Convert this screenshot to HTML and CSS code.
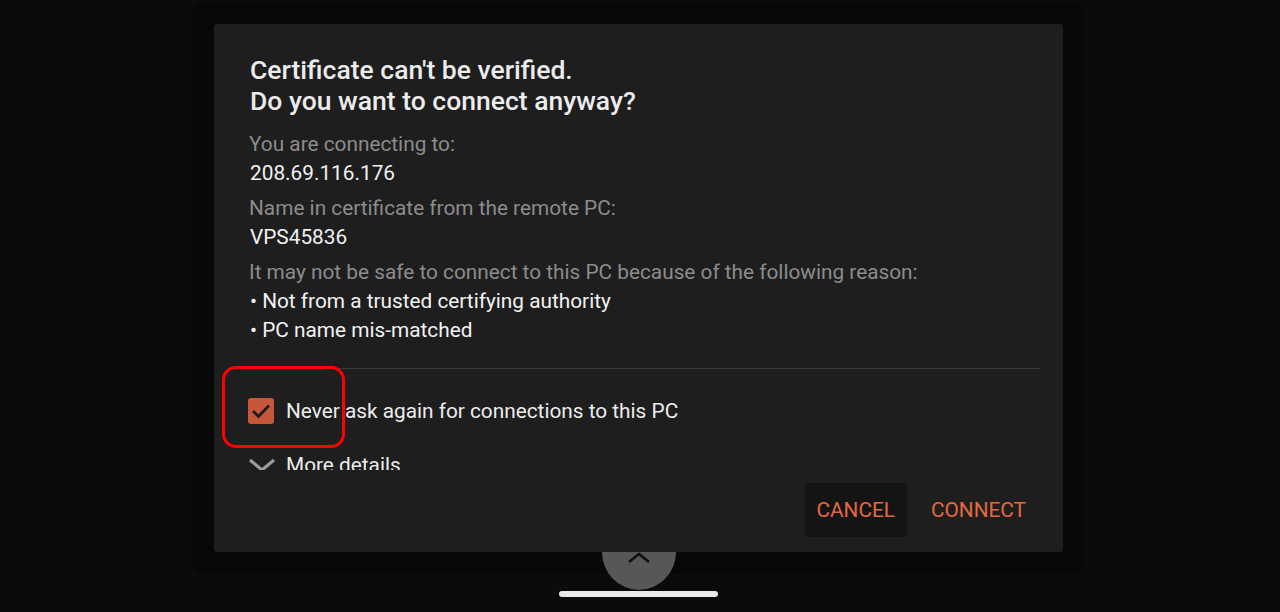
FILE: index.html
```html
<!DOCTYPE html>
<html>
    <head>
        <title>Certificate warning</title>
        <link rel="stylesheet" href="styles.css">
    </head>
    <body>
        <div class="screen">
            <div class="dialog">
                <div class="dialog-content">
                    <h2 class="dialog-title">Certificate can't be verified.<br>Do you want to connect anyway?</h2>

                    <div class="info-block">
                        <div class="info-label">You are connecting to:</div>
                        <div class="info-value">208.69.116.176</div>
                    </div>
                    <div class="info-block">
                        <div class="info-label">Name in certificate from the remote PC:</div>
                        <div class="info-value">VPS45836</div>
                    </div>
                    <div class="info-block">
                        <div class="info-label">It may not be safe to connect to this PC because of the following reason:</div>
                        <div class="info-value">• Not from a trusted certifying authority</div>
                        <div class="info-value">• PC name mis-matched</div>
                    </div>

                    <div class="divider"></div>

                    <label class="check-row">
                        <span class="checkbox">
                            <svg width="20" height="16" viewBox="0 0 20 16"><path d="M2 8 L7.5 13.5 L18 2.5" fill="none" stroke="#1c1c1c" stroke-width="2.8"/></svg>
                        </span>
                        <span class="check-text">Never ask again for connections to this PC</span>
                    </label>

                    <div class="details-row">
                        <svg width="28" height="16" viewBox="0 0 28 16"><path d="M2 3 L14 13 L26 3" fill="none" stroke="#9a9a9a" stroke-width="3.2"/></svg>
                        <span class="details-text">More details</span>
                    </div>
                </div>

                <div class="dialog-footer">
                    <button class="dlg-button cancel">CANCEL</button>
                    <button class="dlg-button">CONNECT</button>
                </div>

                <div class="highlight"></div>
            </div>

            <div class="nav-bubble">
                <svg width="24" height="12" viewBox="0 0 24 12"><path d="M2 10 L12 2 L22 10" fill="none" stroke="#111" stroke-width="2.6"/></svg>
            </div>
            <div class="home-bar"></div>
        </div>
    </body>
</html>
```

FILE: styles.css
```css
body{
    margin: 0;
    background: #0b0b0b;
    font-family: Roboto, "Liberation Sans", sans-serif;
    overflow: hidden;
}

.screen{
    position: relative;
    height: 612px;
    padding-top: 24px;
    box-sizing: border-box;
}

.dialog{
    position: relative;
    z-index: 2;
    margin-left: 214px;
    width: 849px;
    height: 528px;
    background: #1e1e1e;
    border-radius: 3px;
    box-shadow: 0 0 0 22px #080808;
    display: flex;
    flex-direction: column;
}

.dialog-content{
    height: 446px;
    overflow: hidden;
    padding: 30px 23px 0 34px;
    box-sizing: border-box;
}

.dialog-title{
    margin: 0 0 14px 2px;
    font-size: 26.5px;
    line-height: 31px;
    font-weight: 500;
    color: #ececec;
}

.info-block{
    margin-bottom: 6px;
    padding-left: 1px;
}

.info-label{
    font-size: 20.8px;
    line-height: 29px;
    color: #8c8c8c;
}

.info-value{
    font-size: 20.8px;
    line-height: 29px;
    color: #f2f2f2;
    padding-left: 1px;
}

.divider{
    height: 1px;
    background: #3a3a3a;
    margin-top: 23px;
}

.check-row{
    display: flex;
    align-items: center;
    gap: 12px;
    margin-top: 29px;
}

.checkbox{
    width: 26px;
    height: 26px;
    border-radius: 3px;
    background: #c6573b;
    display: flex;
    align-items: center;
    justify-content: center;
}

.check-text{
    font-size: 20.8px;
    color: #ececec;
}

.details-row{
    display: flex;
    align-items: center;
    gap: 10px;
    margin-top: 29px;
}

.details-text{
    font-size: 20.8px;
    color: #ececec;
}

.dialog-footer{
    display: flex;
    justify-content: flex-end;
    gap: 12px;
    padding: 13px 25px 15px 0;
}

.dlg-button{
    height: 54px;
    padding: 0 12px;
    border: none;
    border-radius: 4px;
    background: transparent;
    color: #e4693f;
    font-family: Roboto, "Liberation Sans", sans-serif;
    font-size: 20.8px;
}

.dlg-button.cancel{
    background: #141414;
}

.highlight{
    position: absolute;
    left: 8px;
    top: 342px;
    width: 117px;
    height: 76px;
    border: 3.5px solid #ff0000;
    border-radius: 14px;
}

.nav-bubble{
    position: absolute;
    z-index: 3;
    left: 602px;
    top: 552px;
    width: 74px;
    height: 38px;
    border-radius: 0 0 37px 37px / 0 0 38px 38px;
    background: #575757;
    display: flex;
    justify-content: center;
    align-items: flex-start;
    box-sizing: border-box;
}

.home-bar{
    position: absolute;
    left: 559px;
    top: 591px;
    width: 159px;
    height: 6px;
    border-radius: 3px;
    background: #e8e8e8;
}
```
